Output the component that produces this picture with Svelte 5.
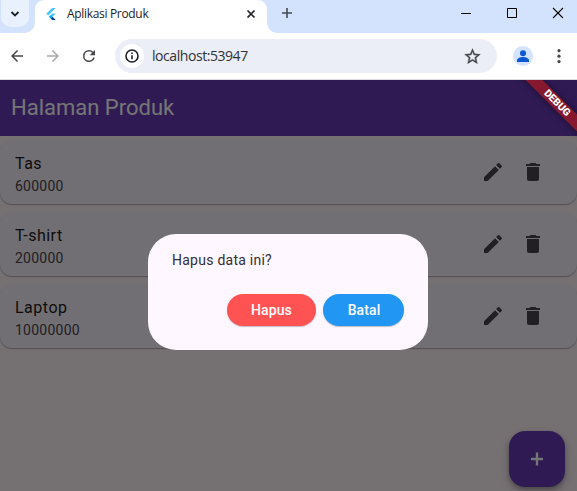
<script>
  const products = [
    { name: 'Tas', price: '600000' },
    { name: 'T-shirt', price: '200000' },
    { name: 'Laptop', price: '10000000' }
  ];
</script>

<div class="window">
  <div class="tabstrip">
    <div class="tabsearch">
      <svg width="10" height="8" viewBox="0 0 10 8"><path d="M1.500 2l3.500 3.500L8.500 2" fill="none" stroke="#1f2023" stroke-width="1.800" /></svg>
    </div>
    <div class="tab">
      <svg class="logo" width="10" height="12" viewBox="0 0 10 12.700">
        <path d="M6.200 0H10L2 8 0 6.200z" fill="#47c5fb" />
        <path d="M6.200 5.800H10L6.500 9.300 4.600 7.600z" fill="#47c5fb" />
        <path d="M2.800 9.300l1.900-1.800 1.900 1.800-1.900 1.900z" fill="#00a5ee" />
        <path d="M4.700 11.200l1.900-1.900L10 12.700H6.200z" fill="#00468e" />
      </svg>
      <span class="title">Aplikasi Produk</span>
      <svg class="close" width="10" height="10" viewBox="0 0 10 10"><path d="M1.500 1.500l7 7M8.500 1.500l-7 7" stroke="#202124" stroke-width="1.700" /></svg>
    </div>
    <svg class="newtab" width="12" height="12" viewBox="0 0 12 12"><path d="M6 1v10M1 6h10" stroke="#474a50" stroke-width="1.600" /></svg>
    <div class="controls">
      <svg width="12" height="12" viewBox="0 0 12 12"><path d="M1 6.500h10" stroke="#000" /></svg>
      <svg width="12" height="12" viewBox="0 0 12 12"><path d="M1.500 1.500h9v9h-9z" fill="none" stroke="#000" /></svg>
      <svg width="12" height="12" viewBox="0 0 12 12"><path d="M1 1l10 10M11 1L1 11" stroke="#000" stroke-width="1.100" /></svg>
    </div>
  </div>

  <div class="toolbar">
    <svg class="nav" width="18" height="18" viewBox="0 0 24 24"><path d="M20 11H7.830l5.590-5.590L12 4l-8 8 8 8 1.410-1.410L7.830 13H20z" fill="#46474a" /></svg>
    <svg class="nav" width="18" height="18" viewBox="0 0 24 24"><path d="M4 11h12.170l-5.590-5.590L12 4l8 8-8 8-1.410-1.410L16.170 13H4z" fill="#a9aaac" /></svg>
    <svg class="nav" width="18" height="18" viewBox="0 0 24 24"><path d="M17.650 6.350A7.960 7.960 0 0 0 12 4a8 8 0 1 0 7.730 10h-2.080A6 6 0 1 1 12 6c1.660 0 3.140.690 4.220 1.780L13 11h7V4z" fill="#46474a" /></svg>
    <div class="omnibox">
      <div class="info">
        <svg width="16" height="16" viewBox="0 0 16 16"><circle cx="8" cy="8" r="6" fill="none" stroke="#1f2023" stroke-width="1.600" /><path d="M8 7.200v4M8 4.500v1.500" stroke="#1f2023" stroke-width="1.600" /></svg>
      </div>
      <span class="url">localhost:53947</span>
      <svg class="star" width="19" height="19" viewBox="0 0 24 24"><path d="M22 9.240l-7.190-.620L12 2 9.190 8.630 2 9.240l5.460 4.730L5.820 21 12 17.270 18.180 21l-1.630-7.030zM12 15.400l-3.760 2.270 1-4.280-3.320-2.880 4.380-.380L12 6.100l1.710 4.040 4.380.380-3.320 2.880 1 4.280z" fill="#444549" stroke="#444549" stroke-width=".4" /></svg>
    </div>
    <div class="avatar">
      <svg width="20" height="20" viewBox="0 0 20 20"><circle cx="10" cy="7.200" r="3" fill="#0b57d0" /><path d="M4 16v-1.500c0-2.200 3-3.500 6-3.500s6 1.300 6 3.500V16z" fill="#0b57d0" /></svg>
    </div>
    <svg class="menu" width="4" height="16" viewBox="0 0 4 16"><circle cx="2" cy="2.700" r="1.600" fill="#444549" /><circle cx="2" cy="8.200" r="1.600" fill="#444549" /><circle cx="2" cy="13.600" r="1.600" fill="#444549" /></svg>
  </div>

  <div class="app">
    <header>Halaman Produk</header>
    <main>
      {#each products as product}
        <article>
          <div class="text">
            <div class="name">{product.name}</div>
            <div class="price">{product.price}</div>
          </div>
          <svg width="24" height="24" viewBox="0 0 24 24"><path d="M3 17.250V21h3.750L17.810 9.940l-3.750-3.750zM20.710 7.040a1 1 0 0 0 0-1.410l-2.340-2.340a1 1 0 0 0-1.410 0l-1.830 1.830 3.750 3.750z" fill="#49454f" /></svg>
          <svg width="24" height="24" viewBox="0 0 24 24"><path d="M6 19c0 1.100.900 2 2 2h8c1.100 0 2-.900 2-2V7H6zM19 4h-3.500l-1-1h-5l-1 1H5v2h14z" fill="#49454f" /></svg>
        </article>
      {/each}
    </main>
    <div class="fab"><svg width="12" height="14" viewBox="0 0 12 14"><path d="M6 .500v13M0 7h12" stroke="#fff" stroke-width="2.400" /></svg></div>
    <div class="scrim">
      <div class="dialog">
        <p>Hapus data ini?</p>
        <div class="actions">
          <button class="delete">Hapus</button>
          <button class="cancel">Batal</button>
        </div>
      </div>
    </div>
    <div class="banner">DEBUG</div>
  </div>
</div>

<style>
  .window {
    width: 577px;
    height: 491px;
    display: flex;
    flex-direction: column;
    overflow: hidden;
    background: #fff;
    font-family: Roboto, 'Liberation Sans', sans-serif;
  }
  svg {
    display: block;
    flex: none;
  }
  .tabstrip {
    height: 33px;
    flex: none;
    display: flex;
    background: #d3e3fd;
  }
  .tabsearch {
    width: 28px;
    height: 27px;
    margin-left: 1px;
    border-radius: 0 0 10px 10px;
    background: #e9f1fe;
    display: flex;
    align-items: center;
    justify-content: center;
  }
  .tab {
    position: relative;
    width: 232px;
    height: 33px;
    margin-left: 6px;
    box-sizing: border-box;
    padding: 0 11px 6px;
    border-radius: 9px 9px 0 0;
    background: #fff;
    display: flex;
    align-items: center;
  }
  .tab::before,
  .tab::after {
    content: '';
    position: absolute;
    bottom: 0;
    width: 10px;
    height: 10px;
  }
  .tab::before {
    left: -10px;
    background: radial-gradient(circle at 0 0, transparent 9.500px, #fff 10px);
  }
  .tab::after {
    right: -10px;
    background: radial-gradient(circle at 100% 0, transparent 9.500px, #fff 10px);
  }
  .title {
    flex: 1;
    margin-left: 11px;
    padding-top: 1px;
    font: 12px/16px 'Open Sans', 'Noto Sans', sans-serif;
    letter-spacing: -0.320px;
    color: #1f2023;
  }
  .newtab {
    margin: 7px 0 0 14px;
  }
  .controls {
    display: flex;
    gap: 34px;
    margin: 7px 13px 0 auto;
  }
  .toolbar {
    height: 47px;
    flex: none;
    box-sizing: border-box;
    border-bottom: 1px solid #dddddf;
    padding: 0 16px 0 8px;
    display: flex;
    align-items: center;
  }
  .nav {
    margin-right: 18px;
  }
  .omnibox {
    width: 382px;
    height: 34px;
    margin-left: -1px;
    box-sizing: border-box;
    padding: 0 15px 0 5px;
    border-radius: 17px;
    background: #ebeef7;
    display: flex;
    align-items: center;
  }
  .info {
    width: 24px;
    height: 24px;
    border-radius: 50%;
    background: #fff;
    display: flex;
    align-items: center;
    justify-content: center;
  }
  .url {
    flex: 1;
    margin-left: 8px;
    font: 14px/20px 'Open Sans', 'Noto Sans', sans-serif;
    letter-spacing: -0.440px;
    color: #303236;
  }
  .avatar {
    width: 20px;
    height: 20px;
    margin-left: 16px;
    border-radius: 50%;
    background: #d3e3fd;
  }
  .menu {
    margin-left: auto;
  }
  .app {
    position: relative;
    flex: 1;
    overflow: hidden;
    background: #fff3f9;
  }
  header {
    height: 56px;
    padding-left: 11px;
    background: #673ab7;
    color: #fff;
    font-size: 22px;
    line-height: 55px;
  }
  main {
    display: flex;
    flex-direction: column;
    gap: 8px;
    padding-top: 4px;
  }
  article {
    height: 64px;
    box-sizing: border-box;
    padding: 0 32px 0 15px;
    border-radius: 12px;
    background: #f7f2fa;
    box-shadow: 0 1px 1px rgba(0, 0, 0, 0.250), 0 1px 2px rgba(0, 0, 0, 0.060);
    display: flex;
    align-items: center;
    gap: 16px;
  }
  .text {
    flex: 1;
    padding-top: 3px;
  }
  .name {
    font-size: 16px;
    line-height: 24px;
    letter-spacing: 0.500px;
    color: #1d1b20;
  }
  .price {
    font-size: 14px;
    line-height: 20px;
    letter-spacing: 0.250px;
    color: #49454f;
  }
  .fab {
    position: absolute;
    right: 12px;
    bottom: 4px;
    width: 56px;
    height: 56px;
    border-radius: 16px;
    background: #673ab7;
    box-shadow: 0 3px 5px rgba(0, 0, 0, 0.250), 0 4px 10px rgba(0, 0, 0, 0.150);
    display: flex;
    align-items: center;
    justify-content: center;
  }
  .scrim {
    position: absolute;
    inset: 0;
    background: rgba(0, 0, 0, 0.540);
    display: flex;
    align-items: center;
    justify-content: center;
  }
  .dialog {
    width: 280px;
    height: 116px;
    margin: 12px 1px 0 0;
    box-sizing: border-box;
    padding: 16px 24px 24px;
    border-radius: 28px;
    background: #fef7ff;
  }
  p {
    margin: 0;
    font-size: 14px;
    line-height: 20px;
    letter-spacing: 0.250px;
    color: #322f35;
  }
  .actions {
    display: flex;
    justify-content: flex-end;
    gap: 7px;
    margin-top: 24px;
  }
  button {
    height: 32px;
    padding: 0;
    border: 0;
    border-radius: 16px;
    color: #fff;
    font: 500 14px/32px Roboto, sans-serif;
    letter-spacing: 0.100px;
    box-shadow: 0 1px 1px rgba(0, 0, 0, 0.250);
  }
  .delete {
    width: 89px;
    background: #ff5252;
  }
  .cancel {
    width: 81px;
    padding-left: 1px;
    background: #2196f3;
  }
  .banner {
    position: absolute;
    right: -28.500px;
    top: 15.500px;
    width: 100px;
    height: 12px;
    box-sizing: border-box;
    padding-left: 3px;
    transform: rotate(45deg);
    background: rgba(178, 24, 28, 0.660);
    box-shadow: 0 0 6px rgba(0, 0, 0, 0.500);
    color: #fff;
    font-size: 10.200px;
    font-weight: 900;
    line-height: 12.500px;
    text-align: center;
  }
</style>
